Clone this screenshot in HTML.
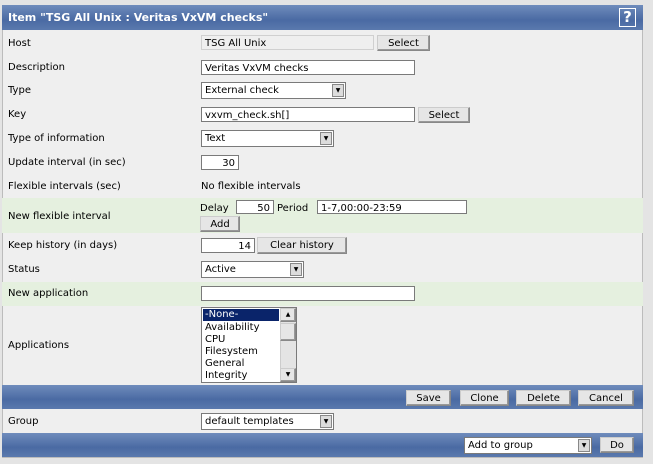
<!DOCTYPE html>
<html><head><style>
body{margin:0;width:653px;height:464px;background:#e4e4e4;font-family:"DejaVu Sans","Liberation Sans",sans-serif;font-size:10px;color:#000;position:relative;overflow:hidden}
div{position:absolute;box-sizing:border-box}
.t{white-space:nowrap;line-height:12px;margin-top:1px}
.row{left:2px;width:641px;background:#efefef}
.g{background:#e5f0df}
.bar{left:2px;width:641px;background:linear-gradient(#6f8cbc,#4a6aa3 60%,#5a79ad)}
.in{background:#fff;border:1px solid #7a7a7a;padding:2px 3px 0;line-height:11px;white-space:nowrap}
.ro{background:#efefef;border:1px solid #d0d0d0}
.btn{background:#e6e6e6;border:1px solid #888;border-top-color:#ccc;border-left-color:#ccc;text-align:center;line-height:15px;white-space:nowrap;box-shadow:inset -1px -1px #999}
.arr{right:1px;top:1px;width:12px;bottom:1px;background:#dcdcdc;border:1px solid #888;font-size:6px;text-align:center;line-height:11px;padding:0}
</style></head><body>
<div style="left:2px;top:5px;width:641px;height:453px;background:#efefef;border:1px solid #bcbcbc"></div>
<div class="bar" style="top:5px;height:25px"></div>
<div class="t" style="left:8px;top:11px;color:#fff;font-weight:bold;font-size:11px">Item "TSG All Unix : Veritas VxVM checks"</div>
<div style="left:619px;top:8px;width:17px;height:19px;border:1px solid #fff;color:#fff;font-weight:bold;font-size:15px;text-align:center;line-height:17px">?</div>

<div class="t" style="left:8px;top:37px">Host</div>
<div class="in ro" style="left:201px;top:35px;width:173px;height:15px">TSG All Unix</div>
<div class="btn" style="left:377px;top:35px;width:53px;height:16px">Select</div>

<div class="t" style="left:8px;top:61px">Description</div>
<div class="in" style="left:201px;top:60px;width:214px;height:15px">Veritas VxVM checks</div>

<div class="t" style="left:8px;top:84px">Type</div>
<div class="in" style="left:201px;top:82px;width:145px;height:17px">External check<div class="arr">▼</div></div>

<div class="t" style="left:8px;top:108px">Key</div>
<div class="in" style="left:201px;top:107px;width:214px;height:15px">vxvm_check.sh[]</div>
<div class="btn" style="left:418px;top:107px;width:52px;height:16px">Select</div>

<div class="t" style="left:8px;top:132px">Type of information</div>
<div class="in" style="left:201px;top:130px;width:133px;height:17px">Text<div class="arr">▼</div></div>

<div class="t" style="left:8px;top:156px">Update interval (in sec)</div>
<div class="in" style="left:201px;top:155px;width:38px;height:15px;text-align:right">30</div>

<div class="t" style="left:8px;top:180px">Flexible intervals (sec)</div>
<div class="t" style="left:201px;top:180px">No flexible intervals</div>

<div class="row g" style="top:198px;height:35px"></div>
<div class="t" style="left:8px;top:210px">New flexible interval</div>
<div class="t" style="left:200px;top:202px">Delay</div>
<div class="in" style="left:236px;top:200px;width:38px;height:14px;text-align:right">50</div>
<div class="t" style="left:277px;top:202px">Period</div>
<div class="in" style="left:317px;top:200px;width:150px;height:14px">1-7,00:00-23:59</div>
<div class="btn" style="left:200px;top:216px;width:40px;height:16px">Add</div>

<div class="t" style="left:8px;top:239px">Keep history (in days)</div>
<div class="in" style="left:201px;top:238px;width:54px;height:15px;text-align:right">14</div>
<div class="btn" style="left:257px;top:237px;width:90px;height:17px">Clear history</div>

<div class="t" style="left:8px;top:263px">Status</div>
<div class="in" style="left:201px;top:261px;width:103px;height:17px">Active<div class="arr">▼</div></div>

<div class="row g" style="top:282px;height:24px"></div>
<div class="t" style="left:8px;top:287px">New application</div>
<div class="in" style="left:201px;top:286px;width:214px;height:15px"></div>

<div class="t" style="left:8px;top:339px">Applications</div>
<div style="left:201px;top:307px;width:96px;height:76px;background:#fff;border:1px solid #7a7a7a;line-height:12px">
<div style="left:1px;top:1px;width:76px;height:12px;background:#0a246a;color:#fff;padding-left:2px">-None-</div>
<div class="t" style="left:3px;top:13px">Availability<br>CPU<br>Filesystem<br>General<br>Integrity</div>
<div style="right:0;top:0;width:16px;height:74px;background:#e4e4e4;border-left:1px solid #ccc"></div>
<div class="btn" style="right:0;top:0;width:16px;height:14px;font-size:6px;line-height:12px">▲</div>
<div class="btn" style="right:0;top:15px;width:16px;height:18px"></div>
<div class="btn" style="right:0;bottom:0;width:16px;height:14px;font-size:6px;line-height:12px">▼</div>
</div>

<div class="bar" style="top:385px;height:24px"></div>
<div class="btn" style="left:406px;top:390px;width:45px;height:16px">Save</div>
<div class="btn" style="left:460px;top:390px;width:49px;height:16px">Clone</div>
<div class="btn" style="left:516px;top:390px;width:55px;height:16px">Delete</div>
<div class="btn" style="left:578px;top:390px;width:56px;height:16px">Cancel</div>

<div class="t" style="left:8px;top:415px">Group</div>
<div class="in" style="left:201px;top:413px;width:133px;height:17px">default templates<div class="arr">▼</div></div>

<div class="bar" style="top:433px;height:24px"></div>
<div class="in" style="left:464px;top:437px;width:128px;height:17px">Add to group<div class="arr">▼</div></div>
<div class="btn" style="left:600px;top:437px;width:34px;height:16px">Do</div>
</body></html>
